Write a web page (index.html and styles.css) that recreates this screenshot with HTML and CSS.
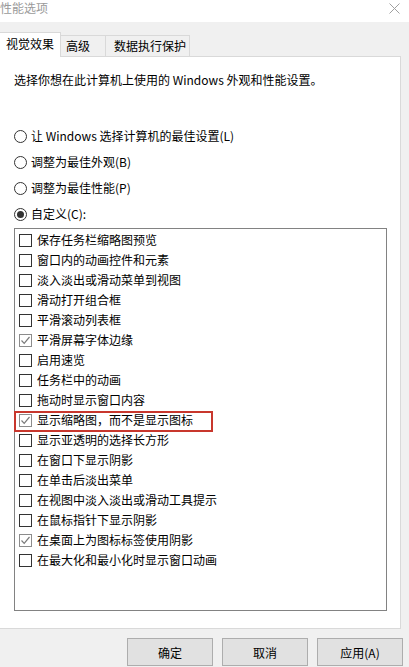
FILE: index.html
```html
<!DOCTYPE html>
<html lang="zh-CN">
<head>
  <meta charset="UTF-8" />
  <title>性能选项</title>
  <link rel="stylesheet" href="styles.css">
</head>
<body>
  <div class="titlebar">
    <span class="title">性能选项</span>
    <svg class="close" width="11" height="11" viewBox="0 0 11 11"><path d="M0.5 0.5 L10.5 10.5 M10.5 0.5 L0.5 10.5" stroke="#a0a0a0" stroke-width="1" fill="none"/></svg>
  </div>

  <div class="tabs">
    <div class="tab active">视觉效果</div>
    <div class="tab t2">高级</div>
    <div class="tab t3">数据执行保护</div>
  </div>

  <div class="panel">
    <p class="intro">选择你想在此计算机上使用的 Windows 外观和性能设置。</p>

    <div class="radios">
      <div class="radio"><span class="circle"></span>让 Windows 选择计算机的最佳设置(L)</div>
      <div class="radio"><span class="circle"></span>调整为最佳外观(B)</div>
      <div class="radio"><span class="circle"></span>调整为最佳性能(P)</div>
      <div class="radio"><span class="circle on"></span>自定义(C):</div>
    </div>

    <ul class="list">
      <li class="item"><span class="box"></span>保存任务栏缩略图预览</li>
      <li class="item"><span class="box"></span>窗口内的动画控件和元素</li>
      <li class="item"><span class="box"></span>淡入淡出或滑动菜单到视图</li>
      <li class="item"><span class="box"></span>滑动打开组合框</li>
      <li class="item"><span class="box"></span>平滑滚动列表框</li>
      <li class="item"><span class="box checked"><svg width="11" height="11" viewBox="0 0 11 11"><path d="M1.5 5.5 L4.2 8.3 L9.5 2" stroke="#7a7a7a" stroke-width="1.2" fill="none"/></svg></span>平滑屏幕字体边缘</li>
      <li class="item"><span class="box"></span>启用速览</li>
      <li class="item"><span class="box"></span>任务栏中的动画</li>
      <li class="item"><span class="box"></span>拖动时显示窗口内容</li>
      <li class="item marked"><span class="box checked"><svg width="11" height="11" viewBox="0 0 11 11"><path d="M1.5 5.5 L4.2 8.3 L9.5 2" stroke="#7a7a7a" stroke-width="1.2" fill="none"/></svg></span>显示缩略图，而不是显示图标</li>
      <li class="item"><span class="box"></span>显示亚透明的选择长方形</li>
      <li class="item"><span class="box"></span>在窗口下显示阴影</li>
      <li class="item"><span class="box"></span>在单击后淡出菜单</li>
      <li class="item"><span class="box"></span>在视图中淡入淡出或滑动工具提示</li>
      <li class="item"><span class="box"></span>在鼠标指针下显示阴影</li>
      <li class="item"><span class="box checked"><svg width="11" height="11" viewBox="0 0 11 11"><path d="M1.5 5.5 L4.2 8.3 L9.5 2" stroke="#7a7a7a" stroke-width="1.2" fill="none"/></svg></span>在桌面上为图标标签使用阴影</li>
      <li class="item"><span class="box"></span>在最大化和最小化时显示窗口动画</li>
    </ul>
  </div>

  <div class="buttons">
    <button>确定</button>
    <button>取消</button>
    <button>应用(A)</button>
  </div>
</body>
</html>
```

FILE: styles.css
```css
body { margin: 0; width: 409px; height: 667px; overflow: hidden; background: #f0f0f0; color: #000; font: 12px/16px "Noto Sans CJK SC", sans-serif; }

.titlebar { height: 22px; background: #fff; display: flex; justify-content: space-between; align-items: flex-start; }
.title { margin-left: 0; color: #9a9a9a; }
.close { margin: 3px 9px 0 0; }

.tabs { height: 35px; margin-bottom: -1px; display: flex; align-items: flex-end; position: relative; z-index: 1; }
.tab { box-sizing: border-box; height: 21px; margin-bottom: 1px; padding: 2px 0 0 5px; border: 1px solid #d9d9d9; border-bottom: none; background: #f0f0f0; }
.tab.active { height: 25px; margin-bottom: 0; width: 62px; margin-left: -1px; padding: 3px 0 0 6px; background: #fff; }
.t2 { width: 45px; border-left: none; }
.t3 { width: 84px; border-left: none; padding-left: 8px; }

.panel { box-sizing: border-box; height: 573px; width: 402px; margin-left: -1px; padding: 15px 0 0 14px; background: #fff; border: 1px solid #d9d9d9; }
.intro { margin: 0; }

.radios { margin-top: 35px; }
.radio { height: 26px; display: flex; align-items: center; }
.circle { box-sizing: border-box; width: 13px; height: 13px; margin: 0 4px 0 0; border: 1px solid #333; border-radius: 50%; display: flex; align-items: center; justify-content: center; }
.circle.on::after { content: ""; width: 7px; height: 7px; border-radius: 50%; background: #333; }

.list { box-sizing: border-box; list-style: none; margin: 1px 0 0 0; padding: 1px 0 0 0; width: 373px; height: 383px; border: 1px solid #828282; }
.item { height: 20px; padding-left: 4px; display: flex; align-items: center; position: relative; }
.box { box-sizing: border-box; width: 13px; height: 13px; margin-right: 5px; border: 1px solid #333; display: flex; align-items: center; justify-content: center; }
.box.checked { border-color: #8c8c8c; }
.marked::after { content: ""; position: absolute; top: 1px; left: -1px; width: 199px; height: 21px; box-sizing: border-box; border: 2px solid #c8372d; }

.buttons { margin-top: 9px; padding-right: 6px; display: flex; justify-content: flex-end; gap: 9px; }
.buttons button { width: 86px; height: 28px; margin: 0; padding: 0; background: #e1e1e1; border: 1px solid #adadad; font: 12px "Noto Sans CJK SC", sans-serif; color: #000; }
```
